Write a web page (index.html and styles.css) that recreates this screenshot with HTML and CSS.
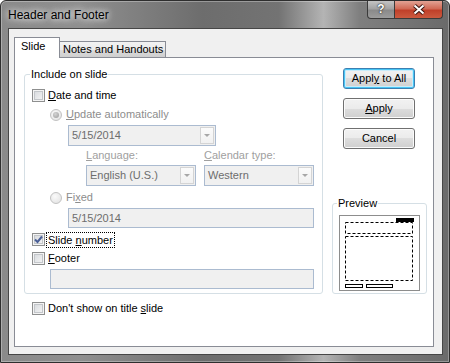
FILE: index.html
```html
<!DOCTYPE html>
<html lang="en">
  <head>
    <meta charset="UTF-8" />
    <meta name="viewport" content="width=device-width, initial-scale=1.0" />
    <title>Header and Footer</title>
    <link rel="stylesheet" href="styles.css">
  </head>
  <body>
    <div class="window">
      <div class="titlebar">
        <span class="title">Header and Footer</span>
        <div class="caption-buttons">
          <span class="cap-btn help">?</span>
          <span class="cap-btn close">
            <svg width="14" height="11" viewBox="0 0 14 11">
              <path d="M2.5 1.5 L11.5 9.5 M11.5 1.5 L2.5 9.5" stroke="#3b1610" stroke-width="4" fill="none" />
              <path d="M2.5 1.5 L11.5 9.5 M11.5 1.5 L2.5 9.5" stroke="#ffffff" stroke-width="2" fill="none" />
            </svg>
          </span>
        </div>
      </div>

      <div class="client">
        <div class="tabs">
          <span class="tab active">Slide</span>
          <span class="tab">Notes and Handouts</span>
        </div>

        <div class="panel">
          <div class="left-col">
            <fieldset class="group main-group">
              <legend>Include on slide</legend>

              <div class="opt">
                <span class="check"></span>
                <span><u>D</u>ate and time</span>
              </div>

              <div class="opt indent-1 disabled row-update">
                <span class="radio on"></span>
                <span><u>U</u>pdate automatically</span>
              </div>

              <div class="combo indent-2 date-combo">
                <span class="combo-text">5/15/2014</span>
                <span class="combo-arrow"></span>
              </div>

              <div class="lang-row indent-3">
                <div class="lang-col">
                  <span class="field-label"><u>L</u>anguage:</span>
                  <div class="combo small-combo">
                    <span class="combo-text">English (U.S.)</span>
                    <span class="combo-arrow"></span>
                  </div>
                </div>
                <div class="lang-col">
                  <span class="field-label"><u>C</u>alendar type:</span>
                  <div class="combo small-combo">
                    <span class="combo-text">Western</span>
                    <span class="combo-arrow"></span>
                  </div>
                </div>
              </div>

              <div class="opt indent-1 disabled row-fixed">
                <span class="radio"></span>
                <span>Fi<u>x</u>ed</span>
              </div>

              <div class="textbox indent-2 fixed-box">5/15/2014</div>

              <div class="opt row-slide">
                <span class="check checked">
                  <svg width="11" height="11" viewBox="0 0 11 11">
                    <path d="M2 5.5 L4.5 8 L9 2.5" stroke="#4a5f97" stroke-width="2" fill="none" />
                  </svg>
                </span>
                <span class="focused">Slide <u>n</u>umber</span>
              </div>

              <div class="opt row-footer">
                <span class="check"></span>
                <span><u>F</u>ooter</span>
              </div>

              <div class="textbox indent-1 footer-box"></div>
            </fieldset>

            <div class="opt row-title">
              <span class="check"></span>
              <span>Don't show on title <u>s</u>lide</span>
            </div>
          </div>

          <div class="right-col">
            <button class="btn default">Appl<u>y</u> to All</button>
            <button class="btn"><u>A</u>pply</button>
            <button class="btn">Cancel</button>

            <fieldset class="group preview-group">
              <legend>Preview</legend>
              <svg class="preview-page" width="81" height="76" viewBox="0 0 81 76">
                <rect x="0.5" y="0.5" width="80" height="75" fill="#ffffff" stroke="#8d8d8d" />
                <rect x="6.5" y="7.5" width="67" height="11" fill="none" stroke="#000" stroke-dasharray="3 2" />
                <rect x="6.5" y="21.5" width="67" height="44" fill="none" stroke="#000" stroke-dasharray="3 2" />
                <rect x="57" y="3" width="18" height="4" fill="#000" />
                <rect x="6.5" y="69.5" width="17" height="3" fill="none" stroke="#000" />
                <rect x="27.5" y="69.5" width="26" height="3" fill="none" stroke="#000" />
              </svg>
            </fieldset>
          </div>
        </div>
      </div>
    </div>
  </body>
</html>
```

FILE: styles.css
```css
html,
body {
  margin: 0;
  padding: 0;
  background: #ffffff;
}

body {
  font-family: "Segoe UI", "Liberation Sans", Arial, sans-serif;
  font-size: 11px;
  line-height: 13px;
  color: #000;
}

/* window frame */

.window {
  width: 450px;
  height: 363px;
  box-sizing: border-box;
  display: flex;
  flex-direction: column;
  padding: 0 6px 7px 7px;
  border: 1px solid #2e2e2e;
  border-radius: 6px 6px 0 0;
  background: linear-gradient(90deg, #8a8a8a 0%, #8f8f8f 18%, #6d6d6d 45%, #737373 62%, #b4b4b4 72%, #7f7f7f 80%, #6a6a6a 100%);
  box-shadow: inset 0 0 0 1px rgba(255, 255, 255, 0.3);
}

.titlebar {
  height: 27px;
  flex-shrink: 0;
  display: flex;
  justify-content: space-between;
  align-items: flex-start;
}

.title {
  margin-top: 7px;
  font-size: 12px;
  line-height: 15px;
  text-shadow: 0 0 6px #fff, 0 0 10px rgba(255, 255, 255, 0.8);
}

.caption-buttons {
  display: flex;
}

.cap-btn {
  height: 18px;
  box-sizing: border-box;
  display: flex;
  justify-content: center;
  align-items: center;
  border: 1px solid #3a3a3a;
  border-top: none;
}

.help {
  width: 28px;
  border-radius: 0 0 0 4px;
  background: linear-gradient(#c4c4c4 0%, #a3a3a3 45%, #8a8a8a 55%, #9c9c9c 100%);
  color: #fff;
  font-weight: bold;
  font-size: 12px;
  text-shadow: 0 0 1px #222, 0 0 2px #222;
}

.close {
  width: 48px;
  border-left: none;
  border-radius: 0 0 4px 0;
  background: linear-gradient(#e2a294 0%, #d06a56 45%, #c0402a 55%, #cc5a3f 100%);
}

.client {
  flex: 1;
  display: flex;
  flex-direction: column;
  border: 1px solid #464646;
  background: #f0f0f0;
}

/* tabs */

.tabs {
  height: 20px;
  padding: 8px 0 0 5px;
  display: flex;
  align-items: flex-end;
}

.tab {
  box-sizing: border-box;
  border: 1px solid #898c95;
  border-bottom: none;
}

.tab.active {
  position: relative;
  z-index: 1;
  width: 46px;
  height: 21px;
  margin-bottom: -1px;
  padding: 2px 0 0 6px;
  background: #ffffff;
}

.tab:not(.active) {
  width: 107px;
  height: 16px;
  margin-left: -1px;
  padding: 1px 0 0 3px;
  background: linear-gradient(#f2f2f2, #ebebeb 50%, #dddddd 50%, #cfcfcf);
}

.panel {
  height: 290px;
  box-sizing: border-box;
  margin: 0 8px 7px 5px;
  padding-left: 9px;
  display: flex;
  border: 1px solid #898c95;
  background: #ffffff;
}

/* group boxes */

.group {
  margin: 0;
  min-width: 0;
  border: 1px solid #d5dfe5;
  border-radius: 3px;
}

.group legend {
  padding: 0 1px;
  margin-left: -2px;
  line-height: 13px;
}

.left-col {
  width: 299px;
  flex-shrink: 0;
}

.main-group {
  margin-top: 10px;
  padding: 8px 8px 4px 7px;
}

.opt {
  height: 13px;
  display: flex;
  align-items: center;
}

.disabled {
  color: #8d8d8d;
}

.indent-1 {
  margin-left: 18px;
}

.indent-2 {
  margin-left: 36px;
}

.indent-3 {
  margin-left: 54px;
}

.row-update {
  margin-top: 6px;
}

.row-fixed {
  margin-top: 5px;
}

.row-slide {
  margin-top: 5px;
}

.row-footer {
  margin-top: 6px;
}

.row-title {
  margin: 8px 0 0 8px;
}

.check {
  width: 13px;
  height: 13px;
  box-sizing: border-box;
  margin-right: 3px;
  flex-shrink: 0;
  display: flex;
  justify-content: center;
  align-items: center;
  border: 1px solid #8e8f8f;
  background: linear-gradient(135deg, #d3d6da, #f8f8f8);
  box-shadow: inset 0 0 0 1px #f4f4f4, inset 0 0 0 2px #c3c6ca;
}

.radio {
  width: 12px;
  height: 12px;
  box-sizing: border-box;
  margin-right: 4px;
  flex-shrink: 0;
  display: flex;
  justify-content: center;
  align-items: center;
  border: 1px solid #c2c2c2;
  border-radius: 50%;
  background: radial-gradient(circle at 40% 35%, #fafafa, #e0e0e0);
}

.radio.on::after {
  content: "";
  width: 6px;
  height: 6px;
  border-radius: 50%;
  background: radial-gradient(circle at 40% 35%, #d4d4d4, #9a9a9a);
}

.focused {
  margin-left: -2px;
  padding: 0 1px;
  line-height: 14px;
  border: 1px dotted #000;
}

/* combos and text boxes */

.combo,
.textbox {
  box-sizing: border-box;
  border: 1px solid #abbbd0;
  background: #f0f0f0;
  color: #6d6d6d;
}

.combo {
  height: 21px;
  display: flex;
  align-items: center;
  justify-content: space-between;
  padding: 0 1px 0 3px;
}

.date-combo {
  width: 148px;
  margin-top: 4px;
}

.combo-arrow {
  width: 14px;
  height: 17px;
  box-sizing: border-box;
  display: flex;
  justify-content: center;
  align-items: center;
  border: 1px solid #d4d4d4;
  background: linear-gradient(#fbfbfb, #f1f1f1);
}

.combo-arrow::after {
  content: "";
  border-left: 3px solid transparent;
  border-right: 3px solid transparent;
  border-top: 3px solid #a7a7a7;
}

.lang-row {
  margin-top: 3px;
  display: flex;
  gap: 8px;
}

.lang-col {
  display: flex;
  flex-direction: column;
  gap: 3px;
}

.field-label {
  color: #a0a0a0;
}

.small-combo {
  width: 110px;
}

.textbox {
  height: 20px;
  padding: 3px 0 0 3px;
}

.fixed-box {
  width: 246px;
  margin-top: 4px;
}

.footer-box {
  width: 264px;
  margin-top: 4px;
}

/* right column */

.right-col {
  width: 95px;
  margin-left: 9px;
  padding-top: 10px;
  flex-shrink: 0;
  display: flex;
  flex-direction: column;
  align-items: flex-start;
}

.btn {
  width: 72px;
  height: 21px;
  margin: 0 0 9px 11px;
  padding: 0;
  box-sizing: border-box;
  font: inherit;
  color: #000;
  border: 1px solid #707070;
  border-radius: 3px;
  background: linear-gradient(#f2f2f2 0%, #ebebeb 50%, #dddddd 50%, #cfcfcf 100%);
  box-shadow: inset 0 0 0 1px #fbfbfb;
}

.btn.default {
  border-color: #3c7fb1;
  box-shadow: inset 0 0 0 1px #48c6f5, inset 0 0 0 2px #c8ecfb;
}

.preview-group {
  width: 95px;
  box-sizing: border-box;
  margin-top: 39px;
  padding: 5px 0 2px 6px;
}

.preview-page {
  display: block;
}
```
